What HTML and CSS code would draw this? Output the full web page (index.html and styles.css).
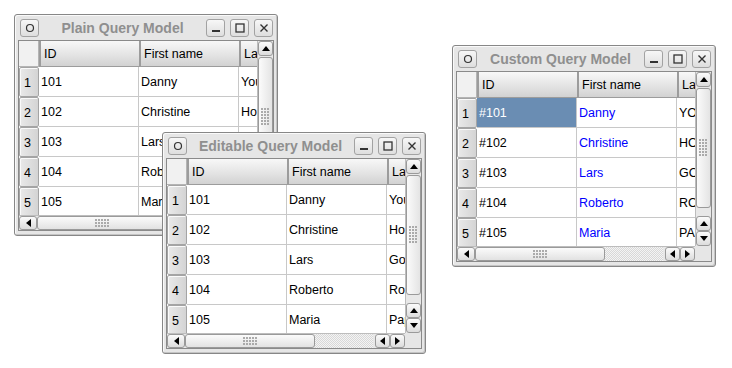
FILE: index.html
```html
<!DOCTYPE html>
<html lang="en">
<head>
    <meta charset="UTF-8">
    <title>Query Models</title>
    <link rel="stylesheet" href="styles.css">
</head>
<body>
    <div class="desk">
        <div class="win win-plain">
            <div class="titlebar">
                <span class="tbtn"><svg width="10" height="10" viewBox="0 0 10 10"><circle cx="5" cy="5" r="3.5" fill="none" stroke="#333" stroke-width="1.2"/></svg></span>
                <span class="title">Plain Query Model</span>
                <span class="tbtn"><svg width="10" height="10" viewBox="0 0 10 10"><rect x="1" y="7" width="8" height="2" fill="#333"/></svg></span>
                <span class="tbtn"><svg width="10" height="10" viewBox="0 0 10 10"><rect x="1" y="1" width="8" height="8" fill="none" stroke="#333" stroke-width="1.3"/></svg></span>
                <span class="tbtn"><svg width="10" height="10" viewBox="0 0 10 10"><path d="M1.5 1.5 L8.5 8.5 M8.5 1.5 L1.5 8.5" stroke="#333" stroke-width="1.4"/></svg></span>
            </div>
            <div class="view">
                <div class="table">
                    <div class="corner"></div><div class="hcell">ID</div><div class="hcell">First name</div><div class="hcell">Last name</div>
                    <div class="rnum">1</div><div class="cell">101</div><div class="cell">Danny</div><div class="cell">Young</div>
                    <div class="rnum">2</div><div class="cell">102</div><div class="cell">Christine</div><div class="cell">Holand</div>
                    <div class="rnum">3</div><div class="cell">103</div><div class="cell">Lars</div><div class="cell">Gordon</div>
                    <div class="rnum">4</div><div class="cell">104</div><div class="cell">Roberto</div><div class="cell">Robitaille</div>
                    <div class="rnum">5</div><div class="cell">105</div><div class="cell">Maria</div><div class="cell">Papadopoulos</div>
                </div>
                <div class="vscroll">
                    <span class="sbtn"><i class="tri up"></i></span>
                    <span class="vthumb"><b class="grip"></b></span>
                    <span class="vtrack"></span>
                    <span class="sbtn"><i class="tri up"></i></span>
                    <span class="sbtn"><i class="tri down"></i></span>
                </div>
                <div class="hscroll">
                    <span class="sbtn wide"><i class="tri left"></i></span>
                    <span class="hthumb"><b class="grip"></b></span>
                    <span class="htrack"></span>
                    <span class="sbtn"><i class="tri left"></i></span>
                    <span class="sbtn"><i class="tri right"></i></span>
                </div>
                <div class="sizer"></div>
            </div>
        </div>

        <div class="win win-custom">
            <div class="titlebar">
                <span class="tbtn"><svg width="10" height="10" viewBox="0 0 10 10"><circle cx="5" cy="5" r="3.5" fill="none" stroke="#333" stroke-width="1.2"/></svg></span>
                <span class="title">Custom Query Model</span>
                <span class="tbtn"><svg width="10" height="10" viewBox="0 0 10 10"><rect x="1" y="7" width="8" height="2" fill="#333"/></svg></span>
                <span class="tbtn"><svg width="10" height="10" viewBox="0 0 10 10"><rect x="1" y="1" width="8" height="8" fill="none" stroke="#333" stroke-width="1.3"/></svg></span>
                <span class="tbtn"><svg width="10" height="10" viewBox="0 0 10 10"><path d="M1.5 1.5 L8.5 8.5 M8.5 1.5 L1.5 8.5" stroke="#333" stroke-width="1.4"/></svg></span>
            </div>
            <div class="view">
                <div class="table">
                    <div class="corner"></div><div class="hcell">ID</div><div class="hcell">First name</div><div class="hcell">Last name</div>
                    <div class="rnum">1</div><div class="cell selected">#101</div><div class="cell blue">Danny</div><div class="cell">YOUNG</div>
                    <div class="rnum">2</div><div class="cell">#102</div><div class="cell blue">Christine</div><div class="cell">HOLAND</div>
                    <div class="rnum">3</div><div class="cell">#103</div><div class="cell blue">Lars</div><div class="cell">GORDON</div>
                    <div class="rnum">4</div><div class="cell">#104</div><div class="cell blue">Roberto</div><div class="cell">ROBITAILLE</div>
                    <div class="rnum">5</div><div class="cell">#105</div><div class="cell blue">Maria</div><div class="cell">PAPADOPOULOS</div>
                </div>
                <div class="vscroll">
                    <span class="sbtn"><i class="tri up"></i></span>
                    <span class="vthumb"><b class="grip"></b></span>
                    <span class="vtrack"></span>
                    <span class="sbtn"><i class="tri up"></i></span>
                    <span class="sbtn"><i class="tri down"></i></span>
                </div>
                <div class="hscroll">
                    <span class="sbtn wide"><i class="tri left"></i></span>
                    <span class="hthumb"><b class="grip"></b></span>
                    <span class="htrack"></span>
                    <span class="sbtn"><i class="tri left"></i></span>
                    <span class="sbtn"><i class="tri right"></i></span>
                </div>
                <div class="sizer"></div>
            </div>
        </div>

        <div class="win win-editable">
            <div class="titlebar">
                <span class="tbtn"><svg width="10" height="10" viewBox="0 0 10 10"><circle cx="5" cy="5" r="3.5" fill="none" stroke="#333" stroke-width="1.2"/></svg></span>
                <span class="title">Editable Query Model</span>
                <span class="tbtn"><svg width="10" height="10" viewBox="0 0 10 10"><rect x="1" y="7" width="8" height="2" fill="#333"/></svg></span>
                <span class="tbtn"><svg width="10" height="10" viewBox="0 0 10 10"><rect x="1" y="1" width="8" height="8" fill="none" stroke="#333" stroke-width="1.3"/></svg></span>
                <span class="tbtn"><svg width="10" height="10" viewBox="0 0 10 10"><path d="M1.5 1.5 L8.5 8.5 M8.5 1.5 L1.5 8.5" stroke="#333" stroke-width="1.4"/></svg></span>
            </div>
            <div class="view">
                <div class="table">
                    <div class="corner"></div><div class="hcell">ID</div><div class="hcell">First name</div><div class="hcell">Last name</div>
                    <div class="rnum">1</div><div class="cell">101</div><div class="cell">Danny</div><div class="cell">Young</div>
                    <div class="rnum">2</div><div class="cell">102</div><div class="cell">Christine</div><div class="cell">Holand</div>
                    <div class="rnum">3</div><div class="cell">103</div><div class="cell">Lars</div><div class="cell">Gordon</div>
                    <div class="rnum">4</div><div class="cell">104</div><div class="cell">Roberto</div><div class="cell">Robitaille</div>
                    <div class="rnum">5</div><div class="cell">105</div><div class="cell">Maria</div><div class="cell">Papadopoulos</div>
                </div>
                <div class="vscroll">
                    <span class="sbtn"><i class="tri up"></i></span>
                    <span class="vthumb"><b class="grip"></b></span>
                    <span class="vtrack"></span>
                    <span class="sbtn"><i class="tri up"></i></span>
                    <span class="sbtn"><i class="tri down"></i></span>
                </div>
                <div class="hscroll">
                    <span class="sbtn wide"><i class="tri left"></i></span>
                    <span class="hthumb"><b class="grip"></b></span>
                    <span class="htrack"></span>
                    <span class="sbtn"><i class="tri left"></i></span>
                    <span class="sbtn"><i class="tri right"></i></span>
                </div>
                <div class="sizer"></div>
            </div>
        </div>
    </div>
</body>
</html>
```

FILE: styles.css
```css
:root {
    --frame: #e6e6e6;
    --frame-border: #878787;
    --grid-line: #c8c8c8;
    --title-text: #8f8f8f;
    --select: #6a8db3;
}

body {
    margin: 0;
    background: #ffffff;
    font-family: 'Liberation Sans', Arial, sans-serif;
    font-size: 12.5px;
    color: #000;
}

.desk {
    position: relative;
    width: 732px;
    height: 368px;
    overflow: hidden;
}

/* windows sit freely on the desktop */
.win {
    position: absolute;
    width: 264px;
    height: 222px;
    box-sizing: border-box;
    background: var(--frame);
    border: 1px solid var(--frame-border);
    border-radius: 3px;
    box-shadow: inset 1px 1px 0 #fafafa, inset -1px -1px 0 #c4c4c4;
    padding: 0 3px 4px 3px;
    display: flex;
    flex-direction: column;
}

.win-plain { left: 14px; top: 14px; }
.win-editable { left: 162px; top: 132px; }
.win-custom { left: 452px; top: 45px; }

.titlebar {
    height: 25px;
    display: flex;
    align-items: center;
    padding: 0 1px 0 2px;
    gap: 5px;
}

.tbtn {
    width: 19px;
    height: 18px;
    box-sizing: border-box;
    border: 1px solid #a2a2a2;
    border-radius: 3px;
    background: linear-gradient(#f7f7f7, #dedede);
    display: flex;
    align-items: center;
    justify-content: center;
    flex: none;
}

.title {
    flex: 1;
    text-align: center;
    font-size: 14px;
    font-weight: bold;
    color: var(--title-text);
    white-space: nowrap;
    overflow: hidden;
}

.view {
    border: 1px solid #8a8a8a;
    display: grid;
    grid-template-columns: 238px 16px;
    grid-template-rows: 174px 15px;
    background: #e4e4e4;
}

.table {
    display: grid;
    grid-template-columns: 20px 100px 100px 100px;
    grid-template-rows: 26px repeat(5, 30px);
    overflow: hidden;
    background: #fff;
}

.corner {
    background: #f1f1f1;
    border-right: 1px solid #b4b4b4;
    border-bottom: 1px solid #b4b4b4;
}

.hcell {
    box-sizing: border-box;
    padding: 6px 3px 0;
    background: linear-gradient(#f8f8f8, #e2e2e2 60%, #d2d2d2);
    border-left: 2px solid #9c9c9c;
    border-bottom: 1px solid #9c9c9c;
    white-space: nowrap;
    overflow: hidden;
}

.cell {
    box-sizing: border-box;
    padding: 8px 2px 0;
    border-right: 1px solid var(--grid-line);
    border-bottom: 1px solid var(--grid-line);
    white-space: nowrap;
    overflow: hidden;
}

.cell.selected {
    background: var(--select);
    color: #fff;
}

.cell.blue {
    color: #0000ff;
}

.rnum {
    box-sizing: border-box;
    padding: 8px 0 0 4px;
    background: linear-gradient(90deg, #e9e9e9, #d4d4d4);
    border: 1px solid #a4a4a4;
    border-radius: 2px;
    box-shadow: inset 1px 1px 0 #fafafa;
}

/* scrollbars */
.vscroll {
    display: flex;
    flex-direction: column;
    background: #e8e8e8;
    border-left: 1px solid #bdbdbd;
}

.hscroll {
    display: flex;
    background: #e8e8e8;
    border-top: 1px solid #bdbdbd;
}

.sizer {
    background: var(--frame);
}

.sbtn {
    width: 15px;
    height: 15px;
    box-sizing: border-box;
    border: 1px solid #9a9a9a;
    border-radius: 3px;
    background: linear-gradient(#fbfbfb, #dcdcdc);
    display: flex;
    align-items: center;
    justify-content: center;
    flex: none;
}

.hscroll .sbtn {
    height: 14px;
    width: 15px;
}

.hscroll .sbtn.wide {
    width: 18px;
}

.vthumb {
    height: 120px;
    margin-top: 1px;
    box-sizing: border-box;
    border: 1px solid #9a9a9a;
    border-radius: 3px;
    background: linear-gradient(90deg, #fbfbfb, #e4e4e4);
    display: flex;
    align-items: center;
    justify-content: center;
}

.vtrack {
    flex: 1;
}

.hthumb {
    width: 130px;
    box-sizing: border-box;
    border: 1px solid #9a9a9a;
    border-radius: 3px;
    background: linear-gradient(#fbfbfb, #e2e2e2);
    display: flex;
    align-items: center;
    justify-content: center;
}

.htrack {
    flex: 1;
    margin-right: 2px;
    background: repeating-conic-gradient(#d8d8d8 0 25%, #f4f4f4 0 50%) 0 0 / 2px 2px;
}

.grip {
    display: block;
    background: radial-gradient(circle at 1px 1px, #a8a8a8 0.7px, transparent 0.9px) 0 0 / 3px 3px;
}

.vthumb .grip {
    width: 9px;
    height: 18px;
}

.hthumb .grip {
    width: 15px;
    height: 9px;
}

.tri {
    width: 0;
    height: 0;
    border-style: solid;
    display: block;
}

.tri.up { border-width: 0 4px 5px 4px; border-color: transparent transparent #000 transparent; }
.tri.down { border-width: 5px 4px 0 4px; border-color: #000 transparent transparent transparent; }
.tri.left { border-width: 4px 5px 4px 0; border-color: transparent #000 transparent transparent; }
.tri.right { border-width: 4px 0 4px 5px; border-color: transparent transparent transparent #000; }
```
